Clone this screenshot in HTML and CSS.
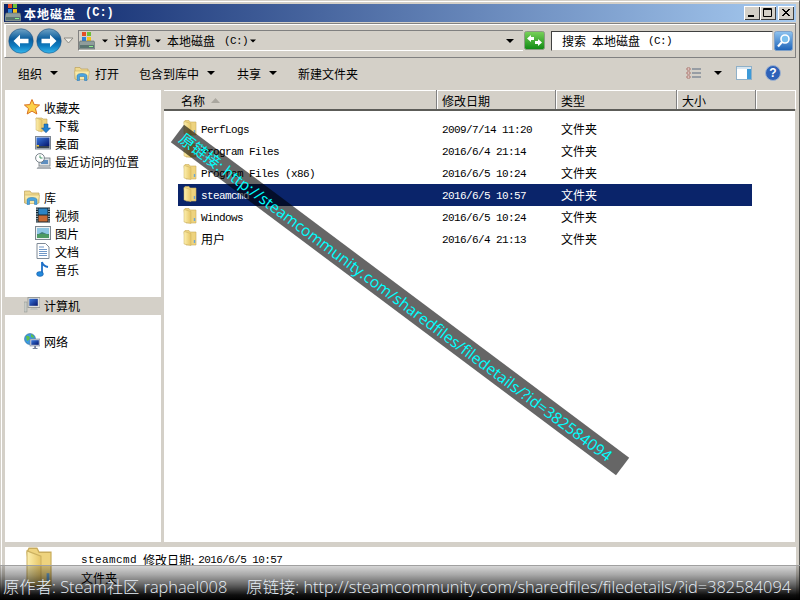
FILE: index.html
```html
<!DOCTYPE html>
<html lang="zh-CN">
<head>
<meta charset="utf-8">
<title>本地磁盘 (C:)</title>
<link rel="stylesheet" href="styles.css">
</head>
<body>
<svg class="sprite" width="0" height="0" aria-hidden="true">
  <defs>
    <linearGradient id="gf" x1="0" y1="0" x2="1" y2="0"><stop offset="0" stop-color="#fdf0b0"/><stop offset="1" stop-color="#e6c565"/></linearGradient>
    <linearGradient id="gb" x1="0" y1="0" x2="0" y2="1"><stop offset="0" stop-color="#6fa3c6"/><stop offset=".42" stop-color="#0a5c9c"/><stop offset=".7" stop-color="#0f7cc0"/><stop offset="1" stop-color="#36b8ee"/></linearGradient>
    <linearGradient id="gg" x1="0" y1="0" x2="0" y2="1"><stop offset="0" stop-color="#7ad25a"/><stop offset="1" stop-color="#0f8a12"/></linearGradient>
    <linearGradient id="gs" x1="0" y1="0" x2="0" y2="1"><stop offset="0" stop-color="#8fc4f0"/><stop offset="1" stop-color="#1c62b8"/></linearGradient>
    <linearGradient id="gm" x1="0" y1="0" x2="1" y2="1"><stop offset="0" stop-color="#3a7ae0"/><stop offset="1" stop-color="#04156c"/></linearGradient>
    <symbol id="folder" viewBox="0 0 14 16" preserveAspectRatio="none">
      <path d="M1 2 L2 0.5 H6 L7 2 H13 V15 H3 Z" fill="#eed37e" stroke="#c9ac5c" stroke-width=".6"/>
      <path d="M1 1.5 L8 3.5 V15.5 L1 14 Z" fill="url(#gf)" stroke="#cbb060" stroke-width=".5"/>
      <path d="M11.5 10 V13" stroke="#6aa6d8" stroke-width="1.4"/>
    </symbol>
    <symbol id="drive" viewBox="0 0 16 18">
      <rect x="3" y="0" width="4" height="4" fill="#e44d26"/><rect x="8" y="0" width="4" height="4" fill="#6cbf3a"/>
      <rect x="3" y="5" width="4" height="4" fill="#2f7fd8"/><rect x="8" y="5" width="4" height="4" fill="#f3c21c"/>
      <path d="M1 9 H15 L16 12 V17 H0 V12 Z" fill="#8f9d9c" stroke="#5d6a6a" stroke-width=".6"/>
      <rect x="1" y="13" width="14" height="3" fill="#5a7471"/>
      <rect x="10" y="14" width="4" height="1" fill="#8cf08c"/>
    </symbol>
    <symbol id="nav" viewBox="0 0 26 26">
      <circle cx="13" cy="13" r="13" fill="#c2c4c6"/>
      <circle cx="13" cy="13" r="12.2" fill="url(#gb)" stroke="#1d4d78" stroke-width=".5"/>
      <path d="M5.5 13 L12 6.8 V10.8 H20.5 V15.2 H12 V19.2 Z" fill="#fff"/>
    </symbol>
    <symbol id="open" viewBox="0 0 16 16">
      <path d="M1 2.5 H6 L7 4 H14 V14 H1 Z" fill="#efd98f" stroke="#bda25a" stroke-width=".7"/>
      <path d="M0.5 6 H15.5 L14 14.5 H1.5 Z" fill="#f8e9a8" stroke="#c9ae63" stroke-width=".6"/>
      <path d="M3 15.5 V11 Q3 8.5 8 8.5 Q13 8.5 13 11 V15.5 H10.5 V11.5 H5.5 V15.5 Z" fill="#4aa4df" stroke="#2170ad" stroke-width=".5"/>
    </symbol>
    <symbol id="star" viewBox="0 0 16 16">
      <path d="M8 .5 L10.2 5.6 L15.6 6 L11.5 9.6 L12.8 15 L8 12.1 L3.2 15 L4.5 9.6 L.4 6 L5.8 5.6 Z" fill="#fcd14a" stroke="#d9701e" stroke-width="1"/>
    </symbol>
    <symbol id="download" viewBox="0 0 16 16">
      <path d="M1 1 H7 L8 2 H12 V14 H3 Z" fill="#eed37e" stroke="#bfa358" stroke-width=".6"/>
      <path d="M1 1 L7 3 V15 L1 13 Z" fill="url(#gf)" stroke="#c9ae63" stroke-width=".5"/>
      <path d="M9 7 H13 V11 H15.5 L11 15.8 L6.5 11 H9 Z" fill="#1f7fcf" stroke="#0d4f8f" stroke-width=".5"/>
    </symbol>
    <symbol id="desktop" viewBox="0 0 16 14">
      <rect x=".5" y=".5" width="15" height="12.5" fill="#e4e8ee" stroke="#7d8792"/>
      <rect x="1.5" y="1.5" width="13" height="8.5" fill="url(#gm)"/>
      <rect x="1.5" y="10" width="13" height="2.2" fill="#394550"/>
      <rect x="1.5" y="9" width="2.5" height="1.5" fill="#e8c43a"/>
    </symbol>
    <symbol id="recent" viewBox="0 0 16 16">
      <rect x="4" y="5" width="11" height="8" fill="#dde1e4" stroke="#727a80" stroke-width=".8"/>
      <rect x="6" y="7" width="7" height="4" fill="#5f8fc0"/>
      <path d="M3 14 H15 L16 16 H2 Z" fill="#b9bec2" stroke="#7e858a" stroke-width=".4"/>
      <circle cx="5" cy="5" r="4.4" fill="#fff" stroke="#6d7880" stroke-width=".9"/>
      <path d="M5 2.5 V5 H7.5" fill="none" stroke="#2f8a55" stroke-width=".9"/>
    </symbol>
    <symbol id="library" viewBox="0 0 16 16">
      <path d="M.5 2 H6 L7.5 4 H15 V14 H.5 Z" fill="#efd98f" stroke="#bda25a" stroke-width=".7"/>
      <path d="M.5 6 H15.5 L14 14.5 H1.5 Z" fill="#f8e9a8" stroke="#c9ae63" stroke-width=".6"/>
      <path d="M3 15.5 V11 Q3 8.5 8 8.5 Q13 8.5 13 11 V15.5 H10.5 V11.5 H5.5 V15.5 Z" fill="#4aa4df" stroke="#2170ad" stroke-width=".5"/>
    </symbol>
    <symbol id="video" viewBox="0 0 16 16">
      <rect x="1" y="0.5" width="14" height="15" fill="#15252e"/>
      <path d="M2 1.5 V14.5 M14 1.5 V14.5" stroke="#cfe3ee" stroke-width="1.3" stroke-dasharray="1.2 1.2"/>
      <rect x="3.5" y="1.5" width="9" height="6" fill="#2d84c4"/>
      <rect x="3.5" y="8.5" width="9" height="6" fill="#c86a35"/>
    </symbol>
    <symbol id="picture" viewBox="0 0 16 14">
      <rect x=".5" y=".5" width="15" height="13" fill="#eef1f3" stroke="#7d878f"/>
      <rect x="2" y="2" width="12" height="6" fill="#8fc6e4"/>
      <rect x="2" y="8" width="12" height="4" fill="#4d9a63"/>
      <path d="M2 9 L7 6 L14 9 V8 H2 Z" fill="#3f7f78"/>
    </symbol>
    <symbol id="doc" viewBox="0 0 14 16">
      <path d="M1 .5 H9.5 L13 4 V15.5 H1 Z" fill="#fff" stroke="#7f8a96"/>
      <path d="M3 4 H8 M3 6.5 H11 M3 8.5 H11 M3 10.5 H11 M3 12.5 H11" stroke="#7097c6"/>
    </symbol>
    <symbol id="music" viewBox="0 0 14 16">
      <path d="M6 1 V12 M6 1 Q7 5 12 6" fill="none" stroke="#1d6fc7" stroke-width="1.8"/>
      <ellipse cx="4" cy="13" rx="3.4" ry="2.4" fill="#2389dc" stroke="#0e4f99" stroke-width=".5"/>
    </symbol>
    <symbol id="computer" viewBox="0 0 16 16">
      <rect x="0" y="5" width="3" height="10" fill="#c8cbc6" stroke="#8b8f8a" stroke-width=".5"/>
      <rect x="4" y="0.5" width="12" height="10" fill="#dedfdb" stroke="#9a9c98"/>
      <rect x="5.3" y="1.8" width="8.5" height="7" fill="url(#gm)"/>
      <path d="M7 11 H13 L14 13 H6 Z" fill="#bfc1bd"/>
    </symbol>
    <symbol id="network" viewBox="0 0 16 16">
      <circle cx="6" cy="6" r="5.5" fill="#3c9be0" stroke="#27628f" stroke-width=".5"/>
      <path d="M2 3 Q5 2 6 5 Q5 8 3 8 Z M7 1 Q10 2 10 5 L7 4 Z" fill="#5fc04a"/>
      <rect x="6" y="6" width="10" height="7" fill="#c9cfdc" stroke="#75809a" stroke-width=".6"/>
      <rect x="7.3" y="7.2" width="7.5" height="4.6" fill="url(#gm)"/>
      <path d="M10.2 13 H12 V15 H13.5 V16 H8.7 V15 H10.2 Z" fill="#75809a"/>
    </symbol>
  </defs>
</svg>

<div class="window">
  <header class="titlebar">
    <svg class="ico-title"><use href="#drive"/></svg>
    <span class="title-text">本地磁盘</span>
    <span class="title-drive">(C:)</span>
    <div class="winbtns">
      <button class="winbtn"><svg width="15" height="14" viewBox="0 0 15 14"><rect x="4" y="9" width="6" height="2" fill="#000"/></svg></button>
      <button class="winbtn"><svg width="15" height="14" viewBox="0 0 15 14"><path d="M3.5 2.5 H11.5 V10.5 H3.5 Z M3.5 3.5 H11.5" fill="none" stroke="#000"/></svg></button>
      <button class="winbtn winbtn-close"><svg width="15" height="14" viewBox="0 0 15 14"><path d="M4 3 L11 10 M11 3 L4 10 M5 3 L12 10 M12 3 L5 10" stroke="#000"/></svg></button>
    </div>
  </header>

  <div class="addressbar">
    <div class="navbtns">
      <svg class="nav"><use href="#nav"/></svg>
      <svg class="nav nav-fwd"><use href="#nav"/></svg>
      <svg class="nav-down" width="11" height="7" viewBox="0 0 11 7"><path d="M1 1 H10 L5.5 6 Z" fill="#eeece6" stroke="#8e8c86"/></svg>
    </div>
    <div class="address">
      <svg class="ico-address"><use href="#drive"/></svg>
      <i class="caret crumb-caret"></i>
      <span class="crumb">计算机</span>
      <i class="caret crumb-caret"></i>
      <span class="crumb">本地磁盘</span>
      <span class="drive-mono">(C:)</span>
      <i class="caret crumb-caret"></i>
      <i class="caret address-drop"></i>
    </div>
    <button class="refresh">
      <svg width="21" height="19" viewBox="0 0 21 19"><rect x=".5" y=".5" width="20" height="18" rx="2" fill="url(#gg)" stroke="#8c9b84"/><path d="M3 7.5 L7 4 V6 H10 V9 H7 V11 Z M18 11.5 L14 15 V13 H11 V10 H14 V8 Z" fill="#fff"/></svg>
    </button>
    <div class="search">
      <span>搜索</span><span class="search-name">本地磁盘</span><span class="drive-mono">(C:)</span>
    </div>
    <button class="searchbtn">
      <svg width="19" height="20" viewBox="0 0 19 20"><rect x=".5" y=".5" width="18" height="19" rx="2" fill="url(#gs)" stroke="#7ea0c8"/><circle cx="11" cy="8" r="4" fill="#7cc0ee" stroke="#fff" stroke-width="1.6"/><path d="M8 11 L4 15.5" stroke="#fff" stroke-width="2.2"/></svg>
    </button>
  </div>

  <nav class="toolbar">
    <span class="tool tool-org">组织<i class="caret"></i></span>
    <span class="tool tool-open"><svg class="ico16"><use href="#open"/></svg>打开</span>
    <span class="tool tool-lib">包含到库中<i class="caret"></i></span>
    <span class="tool tool-share">共享<i class="caret"></i></span>
    <span class="tool tool-new">新建文件夹</span>
    <div class="tool-right">
      <svg class="ico-view" width="15" height="12" viewBox="0 0 15 12"><path d="M1 1 H4 V3 H1 Z M1 5 H4 V7 H1 Z M1 9 H4 V11 H1 Z" fill="#fff" stroke="#a05a50" stroke-width=".8"/><path d="M6 2 H15 M6 6 H15 M6 10 H15" stroke="#5a6a80" stroke-width="1.2"/></svg>
      <i class="caret view-caret"></i>
      <svg class="ico-pane" width="16" height="14" viewBox="0 0 16 14"><rect x=".5" y=".5" width="15" height="13" fill="#fff" stroke="#8fb0c8"/><rect x="1" y="1" width="14" height="2" fill="#d8e6f0"/><rect x="11" y="3" width="4" height="10" fill="#3d9ad8"/></svg>
      <svg class="ico-help" width="16" height="16" viewBox="0 0 16 16"><circle cx="8" cy="8" r="7.5" fill="#2f62b8" stroke="#9fb3d0"/><text x="8" y="12" class="help-q" text-anchor="middle">?</text></svg>
    </div>
  </nav>

  <div class="content">
    <aside class="sidebar">
      <ul class="tree">
        <li class="tree-head"><svg class="ico16"><use href="#star"/></svg>收藏夹</li>
        <li class="tree-item"><svg class="ico16"><use href="#download"/></svg>下载</li>
        <li class="tree-item"><svg class="ico16"><use href="#desktop"/></svg>桌面</li>
        <li class="tree-item"><svg class="ico16"><use href="#recent"/></svg>最近访问的位置</li>
      </ul>
      <ul class="tree">
        <li class="tree-head"><svg class="ico16"><use href="#library"/></svg>库</li>
        <li class="tree-item"><svg class="ico16"><use href="#video"/></svg>视频</li>
        <li class="tree-item"><svg class="ico16"><use href="#picture"/></svg>图片</li>
        <li class="tree-item"><svg class="ico16"><use href="#doc"/></svg>文档</li>
        <li class="tree-item"><svg class="ico16"><use href="#music"/></svg>音乐</li>
      </ul>
      <ul class="tree">
        <li class="tree-head tree-active"><svg class="ico16"><use href="#computer"/></svg>计算机</li>
      </ul>
      <ul class="tree">
        <li class="tree-head"><svg class="ico16"><use href="#network"/></svg>网络</li>
      </ul>
    </aside>
    <main class="files">
      <div class="colhead">
        <div class="col col-name">名称<svg class="sort" width="9" height="5" viewBox="0 0 9 5"><path d="M4.5 0 L9 5 H0 Z" fill="#aaa79f"/></svg></div>
        <div class="col col-date">修改日期</div>
        <div class="col col-type">类型</div>
        <div class="col col-size">大小</div>
        <div class="col col-rest"></div>
      </div>
      <div class="rows">
        <div class="row"><svg class="ico-folder"><use href="#folder"/></svg><span class="name lat">PerfLogs</span><span class="date lat">2009/7/14 11:20</span><span class="type">文件夹</span></div>
        <div class="row"><svg class="ico-folder"><use href="#folder"/></svg><span class="name lat">Program Files</span><span class="date lat">2016/6/4 21:14</span><span class="type">文件夹</span></div>
        <div class="row"><svg class="ico-folder"><use href="#folder"/></svg><span class="name lat">Program Files (x86)</span><span class="date lat">2016/6/5 10:24</span><span class="type">文件夹</span></div>
        <div class="row row-selected"><svg class="ico-folder"><use href="#folder"/></svg><span class="name lat">steamcmd</span><span class="date lat">2016/6/5 10:57</span><span class="type">文件夹</span></div>
        <div class="row"><svg class="ico-folder"><use href="#folder"/></svg><span class="name lat">Windows</span><span class="date lat">2016/6/5 10:24</span><span class="type">文件夹</span></div>
        <div class="row"><svg class="ico-folder"><use href="#folder"/></svg><span class="name name-cjk">用户</span><span class="date lat">2016/6/4 21:13</span><span class="type">文件夹</span></div>
      </div>
    </main>
  </div>

  <footer class="details">
    <svg class="ico-big"><use href="#folder"/></svg>
    <div class="details-text">
      <div class="details-line"><span class="lat details-name">steamcmd</span><span class="details-label">修改日期:</span><span class="lat">2016/6/5 10:57</span></div>
      <div class="details-kind">文件夹</div>
    </div>
  </footer>
</div>

<div class="band">原链接: http://steamcommunity.com/sharedfiles/filedetails/?id=382584094</div>
<div class="credit"><span>原作者: Steam社区 raphael008</span><span>原链接: http://steamcommunity.com/sharedfiles/filedetails/?id=382584094</span></div>
</body>
</html>
```
FILE: styles.css
```css
* { box-sizing: border-box; }
html, body { margin: 0; padding: 0; height: 600px; overflow: hidden; }
body {
  position: relative;
  background: #d4d0c8;
  font-family: "Noto Sans CJK SC", "Liberation Sans", sans-serif;
  font-size: 12px;
  color: #000;
}
.sprite { position: absolute; }
ul { list-style: none; margin: 0; padding: 0; }
button { padding: 0; margin: 0; border: 0; background: none; display: block; }
svg { display: block; flex: none; }
.lat, .drive-mono {
  font-family: "Liberation Mono", monospace;
  font-size: 11px;
  letter-spacing: -0.6px;
}
.window {
  height: 600px;
  display: flex;
  flex-direction: column;
  padding: 3px 3px 0 3px;
  border: 1px solid;
  border-color: #d4d0c8 #5c5c58 #5c5c58 #d4d0c8;
  box-shadow: inset 1px 1px 0 #fff;
}
.titlebar {
  height: 18px;
  flex: none;
  display: flex;
  align-items: center;
  padding-left: 1px;
  background: linear-gradient(90deg, #0a246a, #a6caf0);
  color: #fff;
  font-weight: 700;
}
.ico-title { width: 16px; height: 18px; margin-right: 3px; }
.title-text { letter-spacing: 1px; }
.title-drive { margin-left: 9px; font-family: "Liberation Mono", monospace; font-size: 12px; }
.winbtns { margin-left: auto; margin-right: 2px; display: flex; }
.winbtn {
  width: 16px; height: 14px;
  background: #d4d0c8;
  box-shadow: inset 1px 1px 0 #fff, inset -1px -1px 0 #404040;
}
.winbtn-close { margin-left: 2px; }
.addressbar {
  height: 35px;
  margin-top: 1px;
  flex: none;
  display: flex;
  align-items: center;
  padding-right: 2px;
  border: 1px solid #808080;
  border-color: #808080 #808080 #808080 #fff;
  box-shadow: inset 1px 1px 0 #fff;
}
.navbtns { display: flex; align-items: center; width: 73px; flex: none; padding-left: 3px; }
.nav { width: 26px; height: 26px; }
.nav-fwd { margin-left: 2px; transform: scaleX(-1); }
.nav-down { margin-left: 1px; }
.address {
  width: 445px;
  height: 21px;
  flex: none;
  display: flex;
  align-items: center;
  border-top: 1px solid #808080;
  border-left: 1px solid #808080;
  border-bottom: 1px solid #fff;
}
.ico-address { width: 16px; height: 18px; margin-right: 6px; }
.caret {
  display: block;
  width: 0; height: 0;
  flex: none;
  border-left: 4px solid transparent;
  border-right: 4px solid transparent;
  border-top: 4px solid #000;
}
.crumb-caret { transform: scale(.75); margin-right: 5px; }
.crumb + .crumb-caret { margin-left: 4px; }
.drive-mono { margin-left: 9px; }
.drive-mono + .crumb-caret { margin-left: 1px; }
.address-drop { margin-left: auto; margin-right: 9px; }
.refresh { margin-left: 1px; }
.search {
  width: 222px;
  height: 20px;
  margin-left: 6px;
  flex: none;
  display: flex;
  align-items: center;
  padding-left: 10px;
  background: #fff;
  border: 1px solid #808080;
  border-color: #404040 #d4d0c8 #d4d0c8 #404040;
}
.search-name { margin-left: 6px; }
.search .drive-mono { margin-left: 8px; }
.searchbtn { margin-left: 1px; }
.toolbar {
  height: 32px;
  flex: none;
  display: flex;
  align-items: center;
  padding: 0 15px 2px 14px;
}
.tool { display: flex; align-items: center; white-space: nowrap; }
.tool .caret { margin-left: 8px; }
.tool-open { margin-left: 16px; }
.tool-open .ico16 { margin-right: 5px; }
.tool-lib { margin-left: 20px; }
.tool-share { margin-left: 22px; }
.tool-new { margin-left: 21px; }
.tool-right { margin-left: auto; display: flex; align-items: center; }
.view-caret { margin-left: 13px; }
.ico-pane { margin-left: 14px; }
.ico-help { margin-left: 13px; }
.help-q { fill: #fff; font: 700 12px "Liberation Sans", sans-serif; }
.ico16 { width: 16px; height: 16px; }
.content { flex: 1; min-height: 0; display: flex; }
.sidebar {
  width: 156px;
  flex: none;
  margin-left: 1px;
  padding-top: 9px;
  background: #fff;
  display: flex;
  flex-direction: column;
  gap: 18px;
}
.tree-head, .tree-item { height: 18px; display: flex; align-items: center; padding-bottom: 2px; }
.tree-head { padding-left: 19px; }
.tree-head .ico16 { margin-right: 4px; }
.tree-item { padding-left: 30px; }
.tree-item .ico16 { margin-right: 4px; }
.tree-active { background: #d4d0c8; }
.files {
  flex: 1;
  margin-left: 3px;
  margin-right: 1px;
  background: #fff;
  display: flex;
  flex-direction: column;
}
.colhead {
  height: 21px;
  flex: none;
  display: flex;
  background: #d4d0c8;
  border-bottom: 2px solid #5c5c58;
}
.col {
  padding-left: 5px;
  padding-top: 2px;
  display: flex;
  align-items: center;
  border-right: 1px solid #808080;
  box-shadow: 1px 0 0 #fff, inset 0 1px 0 #fff;
}
.col-name { width: 273px; padding-left: 17px; }
.col-date { width: 119px; }
.col-type { width: 121px; }
.col-size { width: 79px; }
.col-rest { flex: 1; border-right: 0; }
.sort { margin-left: 6px; }
.rows { padding: 7px 0 0 14px; }
.row { width: 574px; height: 22px; display: flex; align-items: center; }
.ico-folder { width: 14px; height: 16px; margin-left: 5px; margin-top: -3px; }
.name { margin-left: 4px; width: 241px; white-space: pre; padding-top: 2px; }
.name-cjk { padding-top: 0; padding-bottom: 2px; }
.date { width: 119px; padding-top: 2px; }
.type { padding-bottom: 2px; }
.row-selected { background: #0a246a; color: #fff; }
.details {
  height: 52px;
  flex: none;
  margin-top: 5px;
  margin-left: 1px;
  background: #fff;
  display: flex;
}
.ico-big { width: 28px; height: 42px; margin-left: 20px; }
.details-text { margin-left: 28px; padding-top: 4px; line-height: 18px; }
.details-line { display: flex; align-items: center; }
.details-name { letter-spacing: 0.4px; }
.details-label { margin: 0 4px 0 6px; }
.band {
  position: absolute;
  left: 122px;
  top: 289px;
  width: 556px;
  height: 22px;
  padding-left: 5px;
  transform: rotate(36.8deg);
  background: rgba(0, 0, 0, 0.6);
  color: #00ffff;
  font: 400 15.5px/22px "Open Sans", "Noto Sans CJK SC", sans-serif;
  white-space: nowrap;
}
.credit {
  position: absolute;
  left: 0;
  right: 0;
  bottom: 0;
  height: 35px;
  padding: 10px 0 0 3px;
  display: flex;
  gap: 19px;
  border-top: 1px solid #a0a0a0;
  background: linear-gradient(180deg, rgba(0,0,0,.16) 0, rgba(0,0,0,.34) 26%, rgba(0,0,0,.62) 56%, rgba(0,0,0,.94) 85%, #000 100%);
  color: #e6eef6;
  font: 300 16.35px/22px "Open Sans", "Noto Sans CJK SC", sans-serif;
  white-space: nowrap;
}
```
